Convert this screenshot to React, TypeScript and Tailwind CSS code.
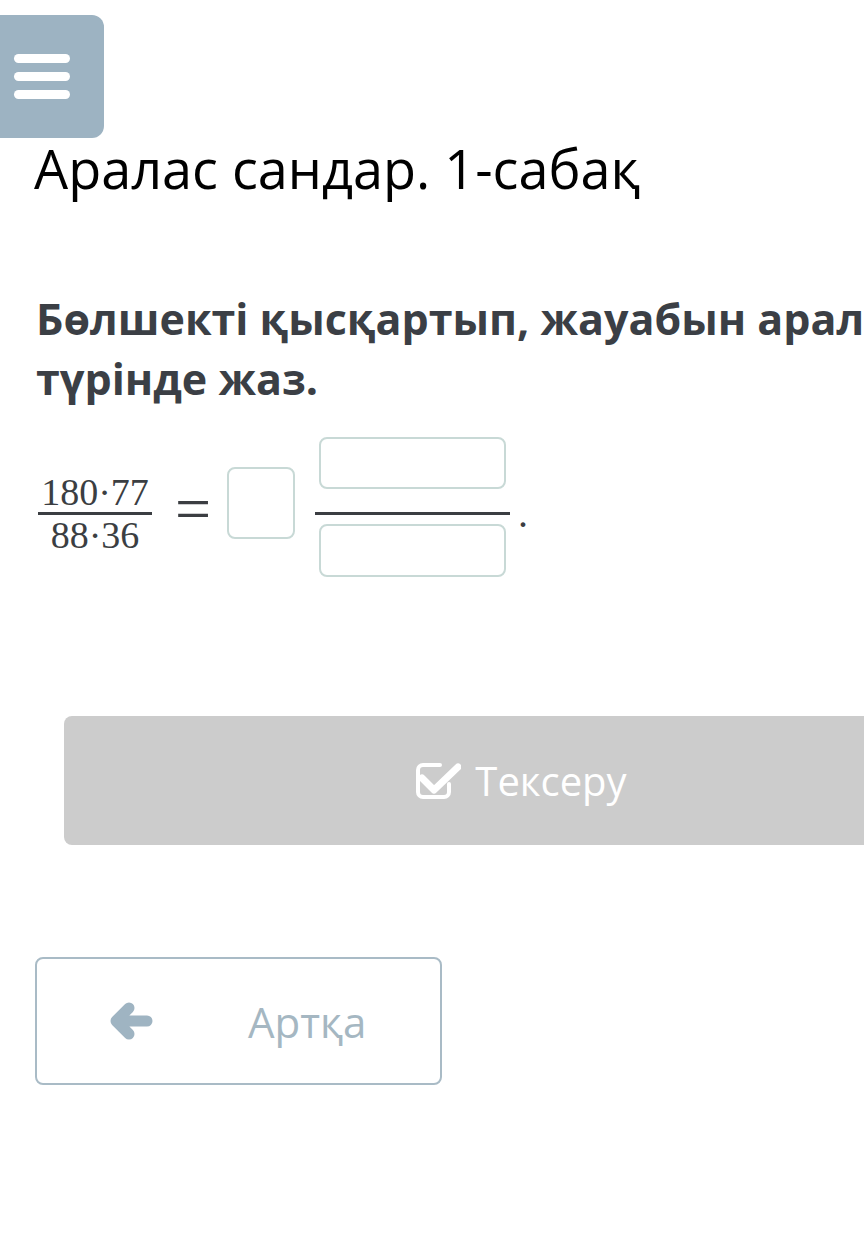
import React from 'react'

function CheckSquareIcon() {
  return (
    <svg width="48" height="48" viewBox="0 0 48 48" fill="none" stroke="white">
      <path d="M27 8H10a5 5 0 0 0-5 5v22a5 5 0 0 0 5 5h21a5 5 0 0 0 5-5v-8" strokeWidth={4} strokeLinecap="round" />
      <path d="M9 21l12 12 24-23" strokeWidth={7} strokeLinecap="round" strokeLinejoin="round" />
    </svg>
  )
}

function ArrowLeftIcon() {
  return (
    <svg width="44" height="38" viewBox="0 0 44 38" fill="none" stroke="#9fb4c2">
      <path d="M16 19H38M20 6L7 19l13 13" strokeWidth={11} strokeLinecap="round" strokeLinejoin="round" />
    </svg>
  )
}

function AnswerBox({ className }: { className: string }) {
  return <div className={`border-2 border-[#c8d9d6] rounded-lg bg-white ${className}`} />
}

export default function App() {
  return (
    <div className="w-[864px] h-[1258px] overflow-hidden bg-white font-['Open_Sans',sans-serif]">
      <div className="w-[1100px]">
        {/* Menu */}
        <button className="mt-[15px] ml-[-16px] w-[120px] h-[123px] rounded-xl bg-[#9db3c2] flex flex-col justify-center gap-[9px] pl-[30px]">
          <span className="block w-[56px] h-[9px] rounded-full bg-white" />
          <span className="block w-[56px] h-[9px] rounded-full bg-white" />
          <span className="block w-[56px] h-[9px] rounded-full bg-white" />
        </button>

        <h1 className="ml-[34px] text-[54px] leading-[60px] text-black">Аралас сандар. 1-сабақ</h1>

        <p className="mt-[91px] ml-[36px] w-[1040px] text-[43px] leading-[60px] font-bold text-[#3b3f45]">
          Бөлшекті қысқартып, жауабын аралас сан түрінде жаз.
        </p>

        {/* Formula */}
        <div className="mt-[28px] ml-[38px] flex items-start text-[#3b3e42] font-['Liberation_Serif',serif]">
          <div className="mt-[37px] flex flex-col items-center w-[114px]">
            <span className="text-[38px] leading-[37px]">180·77</span>
            <span className="block mt-[1px] w-full h-[3px] bg-[#3b3e42]" />
            <span className="mt-[2px] text-[38px] leading-[37px]">88·36</span>
          </div>
          <span className="mt-[40px] ml-[23px] text-[64px] leading-[64px]">=</span>
          <AnswerBox className="mt-[30px] ml-[16px] w-[68px] h-[72px]" />
          <div className="ml-[20px] flex flex-col items-center w-[195px]">
            <AnswerBox className="w-[187px] h-[52px]" />
            <span className="block mt-[23px] w-full h-[3px] bg-[#3b3e42]" />
            <AnswerBox className="mt-[9px] w-[187px] h-[53px]" />
          </div>
          <span className="mt-[57px] ml-[8px] text-[40px] leading-[40px]">.</span>
        </div>

        {/* Check */}
        <button className="mt-[139px] ml-[64px] w-[912px] h-[129px] rounded-lg bg-[#cccccc] flex items-center justify-center gap-[14px] text-white text-[40px]">
          <CheckSquareIcon />
          <span>Тексеру</span>
        </button>

        {/* Back */}
        <button className="mt-[112px] ml-[35px] w-[407px] h-[128px] rounded-lg border-2 border-[#a9bbc6] flex items-center pl-[72px] gap-[95px] text-[#a5b7c2] text-[42px]">
          <ArrowLeftIcon />
          <span>Артқа</span>
        </button>
      </div>
    </div>
  )
}
